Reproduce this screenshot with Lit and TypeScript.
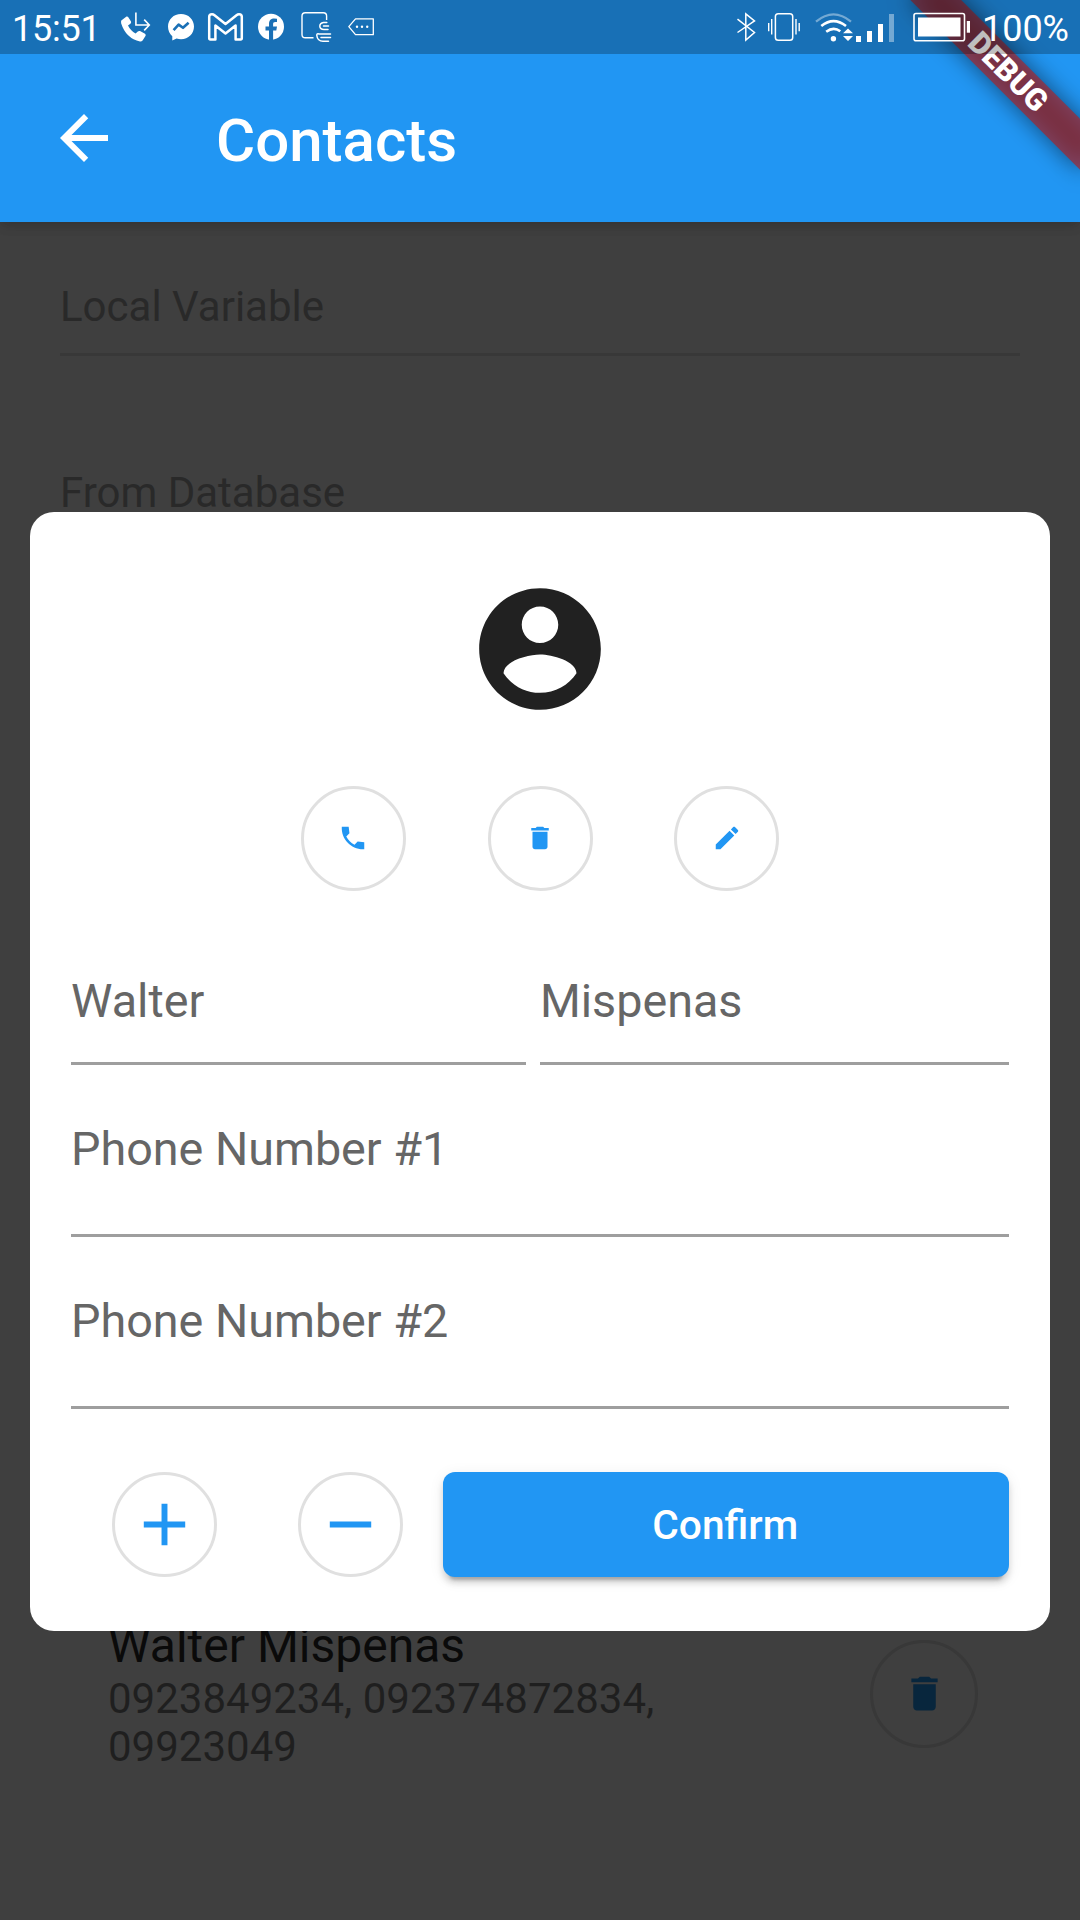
import { LitElement, html, css, svg } from "lit";
import { customElement, property } from "lit/decorators.js";

const ICONS: Record<string, string> = {
  back: "M20 11H7.83l5.59-5.59L12 4l-8 8 8 8 1.41-1.41L7.83 13H20v-2z",
  account:
    "M12 2C6.48 2 2 6.48 2 12s4.48 10 10 10 10-4.48 10-10S17.52 2 12 2zm0 3c1.66 0 3 1.34 3 3s-1.34 3-3 3-3-1.34-3-3 1.34-3 3-3zm0 14.2c-2.5 0-4.71-1.28-6-3.22.03-1.99 4-3.08 6-3.08 1.99 0 5.97 1.09 6 3.08-1.29 1.94-3.5 3.22-6 3.22z",
  phone:
    "M21 15.46l-5.27-.61-2.52 2.52c-2.83-1.44-5.15-3.75-6.59-6.59l2.53-2.53L8.54 3H3.03C2.45 13.18 10.82 21.55 21 20.97v-5.51z",
  trash:
    "M6 19c0 1.1.9 2 2 2h8c1.1 0 2-.9 2-2V7H6v12zM19 4h-3.5l-1-1h-5l-1 1H5v2h14V4z",
  edit: "M3 17.25V21h3.75L17.81 9.94l-3.75-3.75L3 17.25zM20.71 7.04c.39-.39.39-1.02 0-1.41l-2.34-2.34c-.39-.39-1.02-.39-1.41 0l-1.83 1.83 3.75 3.75 1.83-1.83z",
  add: "M19 13h-6v6h-2v-6H5v-2h6V5h2v6h6v2z",
  remove: "M19 13H5v-2h14v2z",
};

@customElement("md-icon")
class MdIcon extends LitElement {
  static styles = css`
    :host {
      display: block;
    }
    .icon {
      display: block;
      width: 100%;
      height: 100%;
      fill: currentColor;
    }
  `;
  @property() name = "";
  render() {
    return html`<svg class="icon" viewBox="0 0 24 24">
      ${svg`<path d=${ICONS[this.name] ?? ""}></path>`}
    </svg>`;
  }
}

@customElement("status-bar")
class StatusBar extends LitElement {
  static styles = css`
    :host {
      display: flex;
      box-sizing: border-box;
      height: 54px;
      padding: 0 11px 0 12px;
      justify-content: space-between;
      background: rgba(0, 0, 0, 0.25);
      color: #fff;
      font: 36px/54px Roboto, sans-serif;
    }
    .side {
      display: flex;
    }
    .text {
      padding-top: 1.5px;
      height: 54px;
    }
    .clock {
      width: 89px;
      letter-spacing: -0.25px;
    }
    svg {
      display: block;
      height: 54px;
    }
    .line {
      fill: none;
      stroke: #fff;
    }
    .solid {
      fill: #fff;
    }
    .cut {
      fill: #1a70b6;
    }
    .bolt {
      fill: none;
      stroke: #1a70b6;
    }
    .dim {
      opacity: 0.4;
    }
  `;
  render() {
    return html`
      <div class="side">
        <span class="text clock">15:51</span>
        <svg width="290" viewBox="101 0 290 54">
          <path
            class="solid"
            d="M121.3 20.5 L126.5 16.6 Q127.6 16.2 128.3 17.2 L131 21.6 Q131.5 22.8 130.4 23.7 L128 25.6 Q130.5 30.8 135.6 33.6 L137.8 31.4 Q138.8 30.6 140 31.1 L145 33.8 Q146.1 34.6 145.6 35.8 L142.6 40.6 Q141.6 41.7 140 41.5 Q126 38.6 121.2 23.6 Q120.8 21.6 121.3 20.5Z"
          />
          <path class="line" stroke-width="1.6" d="M135.9 12.6V25H149M144.2 19.6L149.3 25L144.2 30.4" />
          <path
            class="solid"
            d="M181 13.9C173.5 13.9 168 19.4 168 26.6C168 30.6 169.6 33.9 172.3 36.2V40.6L176.6 38.6Q178.8 39.3 181 39.3C188.5 39.3 194 33.8 194 26.6C194 19.4 188.5 13.9 181 13.9Z"
          />
          <path class="bolt" stroke-width="2.6" stroke-linejoin="round" d="M173.6 30.2L178.6 24.6L183 27.8L188.6 22.8" />
          <path
            class="line"
            stroke-width="2.5"
            stroke-linejoin="round"
            d="M209.2 16.8Q209.2 14.2 212 14.2Q213.3 14.2 214.5 15.2L225.5 24L236.5 15.2Q237.7 14.2 239 14.2Q241.8 14.2 241.8 16.8V38Q241.8 39.4 240.6 39.4H235.6V25.5L225.5 33.5L215.4 25.5V39.4H210.4Q209.2 39.4 209.2 38Z"
          />
          <circle class="solid" cx="271" cy="26.8" r="13" />
          <path
            class="cut"
            d="M269 40V30.5H265.5V26.5H269V23.8C269 20.2 271.1 18.5 274.2 18.5L277 18.7V22.1H275.3C273.6 22.1 273.1 23 273.1 24.3V26.5H277L276.3 30.5H273.1V40Z"
          />
          <path class="line" stroke-width="1.4" d="M326.6 20V16Q326.6 12.7 323.3 12.7H305.3Q302 12.7 302 16V34.4Q302 37.7 305.3 37.7H313.5" />
          <path
            class="line"
            stroke-width="1.5"
            stroke-linecap="round"
            d="M326.8 22.4H323.5Q319.8 23 319.8 26.2Q320 29.4 324 29.4H328M323.5 26H328.5M330.5 34H319Q316.8 33.2 316.8 35.5Q317.5 41.3 323 41.3H328.5M321 37.4H330.5"
          />
          <path class="line" stroke-width="1.3" stroke-linejoin="round" d="M348.8 26.7L355.5 18.8H373.3V34.7H355.5Z" />
          <circle class="solid" cx="357" cy="26.7" r="1.2" />
          <circle class="solid" cx="362" cy="26.7" r="1.2" />
          <circle class="solid" cx="367.2" cy="26.7" r="1.2" />
        </svg>
      </div>
      <div class="side">
        <svg width="250" viewBox="732 0 250 54">
          <path class="line" stroke-width="1.5" d="M737.5 19.2L754.5 32.5L745.8 40V13.8L754.5 20.9L737.5 32.5" />
          <rect class="line" stroke-width="1.5" x="775.4" y="13.7" width="17.3" height="26.5" rx="2.8" />
          <path class="line" stroke-width="1.4" d="M771.7 19V34.5M768.7 23V31.2M796 19V34.5M799.2 23V31.2" />
          <path class="line dim" stroke-width="2.3" d="M816 21.6Q833.5 7.2 851 21.6" />
          <path class="line" stroke-width="2.6" d="M821.3 26Q833.5 16.3 846 26" />
          <path class="line" stroke-width="2.6" d="M826.2 31.8Q833.5 26.2 840.3 31.3" />
          <circle class="solid" cx="833.4" cy="38.7" r="2.7" />
          <path class="solid" d="M843 33.2L848 28.5L853 33.2ZM843 36L848 40.9L853 36Z" />
          <rect class="solid" x="856" y="36" width="5" height="6" />
          <rect class="solid" x="867" y="31" width="5" height="11" />
          <rect class="solid" x="878" y="24" width="5" height="18" />
          <rect class="solid dim" x="889" y="14" width="5" height="28" />
          <rect class="line" stroke-width="1.6" x="914" y="13.5" width="50.5" height="27.3" rx="2" />
          <rect class="solid" x="918" y="17.5" width="42.5" height="19" />
          <rect class="solid" x="966.8" y="21" width="3.2" height="11.7" />
        </svg>
        <span class="text">100%</span>
      </div>
    `;
  }
}

@customElement("circle-button")
class CircleButton extends LitElement {
  static styles = css`
    :host {
      display: flex;
      box-sizing: border-box;
      width: 105px;
      height: 105px;
      flex: none;
      align-items: center;
      justify-content: center;
      border: 3px solid #e0e0e0;
      border-radius: 50%;
      color: #2196f3;
    }
    .small {
      width: 30px;
      height: 30px;
    }
    .medium {
      width: 45px;
      height: 45px;
    }
    .large {
      width: 71px;
      height: 71px;
    }
  `;
  @property() icon = "";
  @property() size = "small";
  render() {
    return html`<md-icon class=${this.size} name=${this.icon}></md-icon>`;
  }
}

@customElement("app-root")
class AppRoot extends LitElement {
  static styles = css`
    :host {
      display: block;
      font-family: Roboto, sans-serif;
    }
    .screen {
      position: relative;
      display: flex;
      flex-direction: column;
      width: 1080px;
      height: 1920px;
      overflow: hidden;
      background: #3f3f3f;
    }
    .status {
      position: absolute;
      inset: 0 0 auto 0;
      z-index: 4;
    }
    .appbar {
      display: flex;
      flex: none;
      box-sizing: border-box;
      height: 222px;
      padding: 54px 48px 0;
      align-items: center;
      gap: 96px;
      background: #2196f3;
      color: #fff;
      z-index: 1;
      box-shadow: 0 6px 12px -3px rgba(0, 0, 0, 0.1), 0 3px 12px rgba(0, 0, 0, 0.12);
    }
    .back {
      width: 72px;
      height: 72px;
    }
    .title {
      font-size: 60px;
      font-weight: 500;
      line-height: 72px;
      padding-top: 5px;
    }
    .ribbon {
      position: absolute;
      left: 960px;
      top: 84px;
      width: 240px;
      height: 36px;
      transform-origin: 120px -84px;
      transform: rotate(45deg);
      z-index: 3;
    }
    .ribbon-shade {
      position: absolute;
      inset: 0;
      background: rgba(0, 0, 0, 0.5);
      filter: blur(11.9px);
    }
    .ribbon-face {
      position: absolute;
      inset: 0;
      background: rgba(183, 28, 28, 0.627);
      color: #fff;
      font-size: 30.6px;
      font-weight: 900;
      line-height: 36px;
      text-align: center;
    }
    .body {
      position: relative;
      display: flex;
      flex-direction: column;
      flex: 1;
      padding: 0 60px;
    }
    .section {
      box-sizing: border-box;
      flex: none;
      font-size: 42px;
      line-height: 50px;
      color: #292929;
    }
    .local {
      height: 134px;
      padding-top: 59.5px;
      border-bottom: 3px solid #383838;
    }
    .database {
      height: 1262px;
      padding-top: 112px;
    }
    .contact {
      display: flex;
      padding: 0 42px 0 48px;
      justify-content: space-between;
    }
    .info {
      width: 580px;
      color: #1f1f1f;
      font-size: 42px;
      line-height: 48px;
    }
    .contact-name {
      padding-bottom: 1px;
      color: #0a0a0a;
      font-size: 48px;
      line-height: 56px;
    }
    .contact-delete {
      width: 108px;
      height: 108px;
      margin-top: 21.5px;
      border-color: #383838;
      color: #08263d;
    }
    .overlay {
      position: absolute;
      inset: 0;
      display: flex;
      align-items: center;
      justify-content: center;
      z-index: 2;
    }
    .dialog {
      display: flex;
      flex-direction: column;
      box-sizing: border-box;
      width: 1020px;
      height: 1119px;
      padding: 64.4px 41px 0;
      border-radius: 24px;
      background: #fff;
    }
    .avatar {
      width: 146px;
      height: 146px;
      align-self: center;
      color: #212121;
    }
    .actions {
      display: flex;
      justify-content: center;
      gap: 81.6px;
      margin-top: 63.7px;
    }
    .names {
      display: flex;
      gap: 14px;
    }
    .field {
      display: flex;
      flex-direction: column;
      box-sizing: border-box;
      flex: none;
      justify-content: flex-end;
      height: 172px;
      padding-bottom: 56.5px;
      border-bottom: 3px solid #9e9e9e;
      color: #666;
      font-size: 46.7px;
      line-height: 56px;
    }
    .names .field {
      height: 174px;
      padding-bottom: 33px;
    }
    .first {
      width: 455px;
    }
    .last {
      flex: 1;
    }
    .footer {
      display: flex;
      margin-top: 63px;
      padding-left: 41px;
    }
    .minus {
      margin-left: 81.3px;
    }
    .confirm {
      flex: 1;
      height: 105px;
      margin-left: 40.2px;
      border-radius: 12px;
      background: #2196f3;
      color: #fff;
      font-size: 40.7px;
      font-weight: 500;
      line-height: 107px;
      text-align: center;
      text-indent: -2px;
      box-shadow: 0 9px 3px -6px rgba(0, 0, 0, 0.2), 0 6px 6px rgba(0, 0, 0, 0.14),
        0 3px 15px rgba(0, 0, 0, 0.08);
    }
  `;

  render() {
    return html`
      <div class="screen">
        <status-bar class="status"></status-bar>
        <header class="appbar">
          <md-icon class="back" name="back"></md-icon>
          <div class="title">Contacts</div>
        </header>
        <div class="ribbon">
          <div class="ribbon-shade"></div>
          <div class="ribbon-face">DEBUG</div>
        </div>
        <main class="body">
          <div class="section local">Local Variable</div>
          <div class="section database">From Database</div>
          <div class="contact">
            <div class="info">
              <div class="contact-name">Walter Mispenas</div>
              <div>0923849234, 092374872834, 09923049</div>
            </div>
            <circle-button class="contact-delete" icon="trash" size="medium"></circle-button>
          </div>
          <div class="overlay">
            <section class="dialog">
              <md-icon class="avatar" name="account"></md-icon>
              <div class="actions">
                ${["phone", "trash", "edit"].map(
                  (icon) => html`<circle-button icon=${icon}></circle-button>`
                )}
              </div>
              <div class="names">
                <div class="field first">Walter</div>
                <div class="field last">Mispenas</div>
              </div>
              <div class="field">Phone Number #1</div>
              <div class="field">Phone Number #2</div>
              <div class="footer">
                <circle-button icon="add" size="large"></circle-button>
                <circle-button class="minus" icon="remove" size="large"></circle-button>
                <div class="confirm">Confirm</div>
              </div>
            </section>
          </div>
        </main>
      </div>
    `;
  }
}
